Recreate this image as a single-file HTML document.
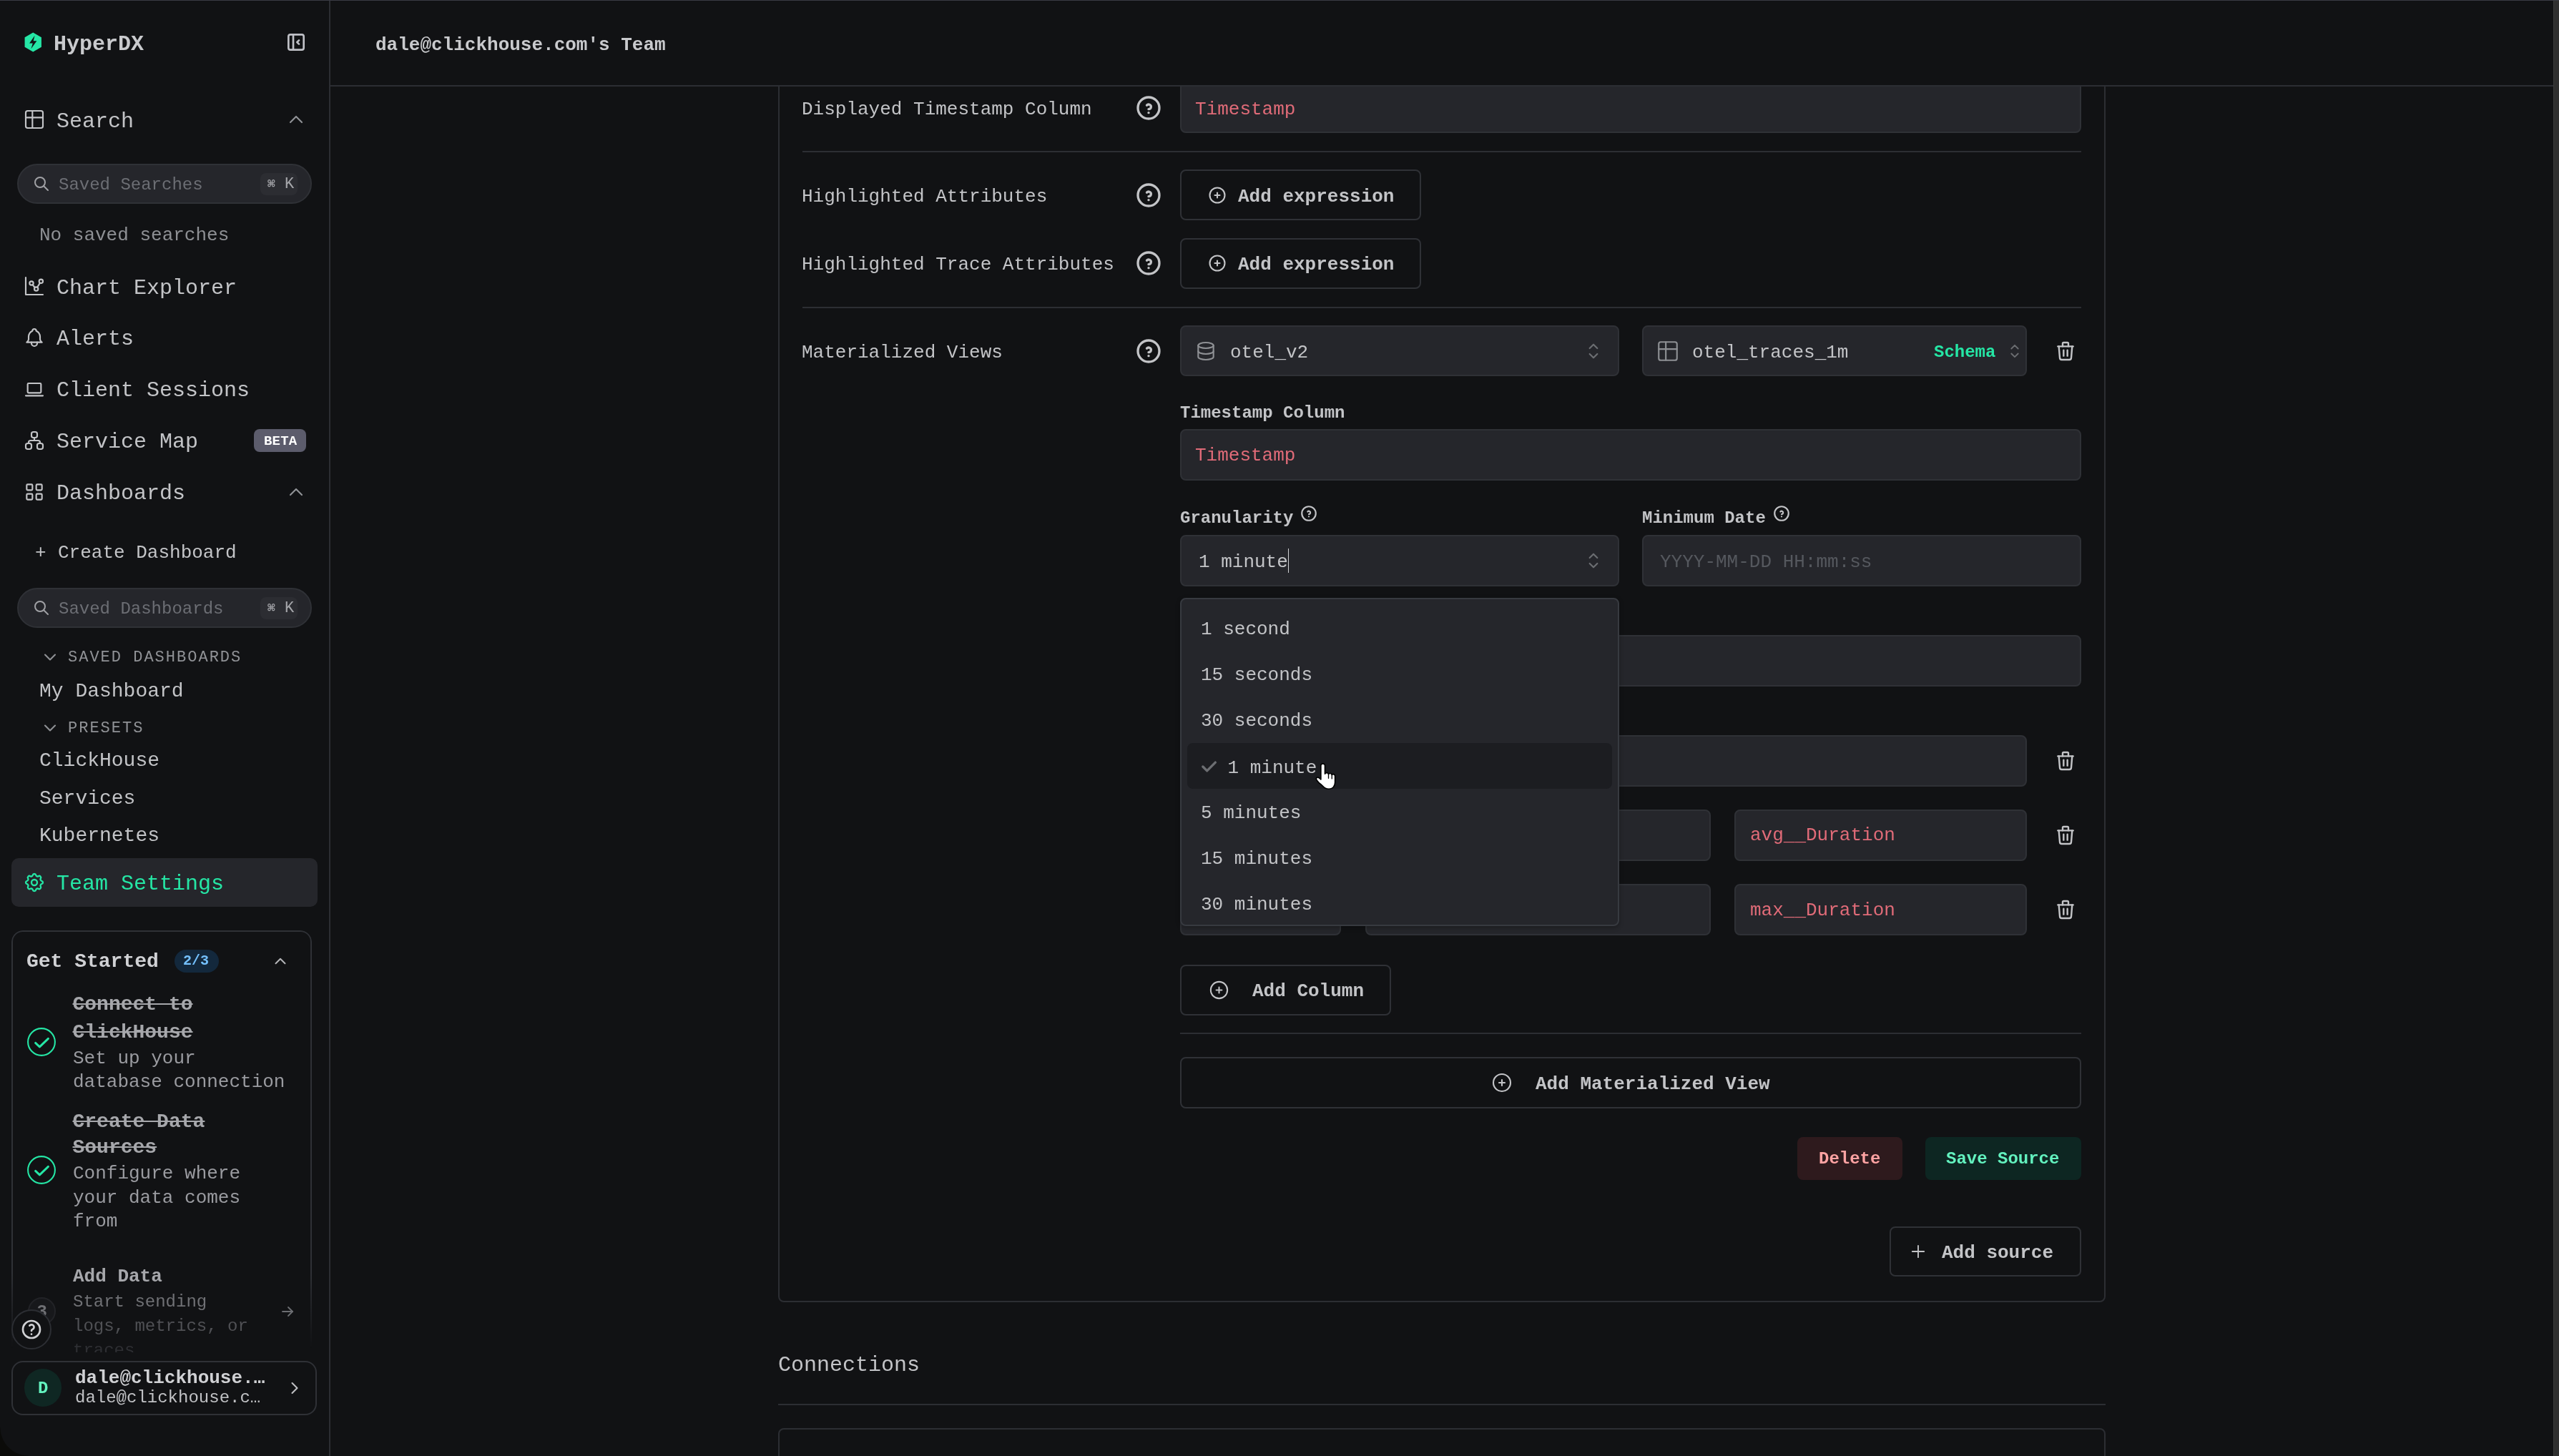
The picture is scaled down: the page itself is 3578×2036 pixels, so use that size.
<!DOCTYPE html>
<html><head><meta charset="utf-8"><style>
html,body{margin:0;padding:0;background:#111214;overflow:hidden}
#root{position:relative;width:1789px;height:1018px;zoom:2;background:#111214;overflow:hidden;font-family:"Liberation Mono",monospace;will-change:transform}
.t{position:absolute;line-height:1;white-space:pre}
.i{position:absolute;overflow:visible}
.b{position:absolute;box-sizing:border-box}
</style></head><body><div id="root">
<svg class="i" style="left:17px;top:22.5px;width:12.25px;height:14px" viewBox="0 0 26 30"><path d="M13 0.5 L25.5 7.75 V22.25 L13 29.5 L0.5 22.25 V7.75 Z" fill="#25e6a5"/><path d="M15.5 5 L7.5 16.5 H12.5 L10 25 L18.5 13 H13.5 Z" fill="#111214"/></svg>
<div class="t" style="left:37.50px;top:23.41px;font-size:15px;color:#c9cacd;font-weight:700;">HyperDX</div>
<svg class="i" style="left:199.00px;top:21.50px;width:16px;height:16px;" viewBox="0 0 24 24" fill="none" stroke="#bfc0c6" stroke-width="2" stroke-linecap="round" stroke-linejoin="round"><path d="M4 4m0 2a2 2 0 0 1 2 -2h12a2 2 0 0 1 2 2v12a2 2 0 0 1 -2 2h-12a2 2 0 0 1 -2 -2z"/><path d="M9 4v16"/><path d="M15 10l-2 2l2 2"/></svg>
<svg class="i" style="left:16.00px;top:75.50px;width:16px;height:16px;" viewBox="0 0 24 24" fill="none" stroke="#c3c4c7" stroke-width="1.6" stroke-linecap="round" stroke-linejoin="round"><path d="M3 5a2 2 0 0 1 2 -2h14a2 2 0 0 1 2 2v14a2 2 0 0 1 -2 2h-14a2 2 0 0 1 -2 -2v-14z"/><path d="M3 10h18"/><path d="M10 3v18"/></svg>
<div class="t" style="left:39.50px;top:77.41px;font-size:15px;color:#c3c4c7;font-weight:400;">Search</div>
<svg class="i" style="left:199.00px;top:75.50px;width:16px;height:16px;" viewBox="0 0 24 24" fill="none" stroke="#909296" stroke-width="1.6" stroke-linecap="round" stroke-linejoin="round"><path d="M6 15l6 -6l6 6"/></svg>
<div class="b" style="left:12.00px;top:114.50px;width:206.00px;height:27.75px;background:#25262b;border:1px solid #2f3136;border-radius:14px;"></div>
<svg class="i" style="left:23.00px;top:122.60px;width:12px;height:12px;" viewBox="0 0 24 24" fill="none" stroke="#a0a1a5" stroke-width="2" stroke-linecap="round" stroke-linejoin="round"><path d="M10 10m-7 0a7 7 0 1 0 14 0a7 7 0 1 0 -14 0"/><path d="M21 21l-6 -6"/></svg>
<div class="t" style="left:41.00px;top:123.31px;font-size:12px;color:#6c6e74;font-weight:400;">Saved Searches</div>
<div class="b" style="left:182.00px;top:121.00px;width:26.00px;height:15.25px;background:#2c2d32;border-radius:4px;"></div>
<div class="t" style="left:187.00px;top:124.51px;font-size:9px;color:#a6a7ab;font-weight:700;">&#8984;</div>
<div class="t" style="left:199.00px;top:123.67px;font-size:11px;color:#a6a7ab;font-weight:400;">K</div>
<div class="t" style="left:27.50px;top:158.04px;font-size:13px;color:#8e9094;font-weight:400;">No saved searches</div>
<svg class="i" style="left:16.00px;top:192.05px;width:16px;height:16px;" viewBox="0 0 24 24" fill="none" stroke="#c3c4c7" stroke-width="1.6" stroke-linecap="round" stroke-linejoin="round"><path d="M3 3v18h18"/><path d="M9 9m-2 0a2 2 0 1 0 4 0a2 2 0 1 0 -4 0"/><path d="M19 7m-2 0a2 2 0 1 0 4 0a2 2 0 1 0 -4 0"/><path d="M14 15m-2 0a2 2 0 1 0 4 0a2 2 0 1 0 -4 0"/><path d="M10.16 10.62l2.34 2.88"/><path d="M15.088 13.328l2.837 -4.586"/></svg>
<div class="t" style="left:39.50px;top:193.91px;font-size:15px;color:#c3c4c7;font-weight:400;">Chart Explorer</div>
<svg class="i" style="left:16.00px;top:227.95px;width:16px;height:16px;" viewBox="0 0 24 24" fill="none" stroke="#c3c4c7" stroke-width="1.6" stroke-linecap="round" stroke-linejoin="round"><path d="M10 5a2 2 0 1 1 4 0a7 7 0 0 1 4 6v3a4 4 0 0 0 2 3h-16a4 4 0 0 0 2 -3v-3a7 7 0 0 1 4 -6"/><path d="M9 17v1a3 3 0 0 0 6 0v-1"/></svg>
<div class="t" style="left:39.50px;top:229.51px;font-size:15px;color:#c3c4c7;font-weight:400;">Alerts</div>
<svg class="i" style="left:16.00px;top:264.00px;width:16px;height:16px;" viewBox="0 0 24 24" fill="none" stroke="#c3c4c7" stroke-width="1.6" stroke-linecap="round" stroke-linejoin="round"><path d="M3 19l18 0"/><path d="M5 6m0 1a1 1 0 0 1 1 -1h12a1 1 0 0 1 1 1v8a1 1 0 0 1 -1 1h-12a1 1 0 0 1 -1 -1z"/></svg>
<div class="t" style="left:39.50px;top:265.51px;font-size:15px;color:#c3c4c7;font-weight:400;">Client Sessions</div>
<svg class="i" style="left:16.00px;top:299.80px;width:16px;height:16px;" viewBox="0 0 24 24" fill="none" stroke="#c3c4c7" stroke-width="1.6" stroke-linecap="round" stroke-linejoin="round"><path d="M3 15m0 2a2 2 0 0 1 2 -2h2a2 2 0 0 1 2 2v2a2 2 0 0 1 -2 2h-2a2 2 0 0 1 -2 -2z"/><path d="M15 15m0 2a2 2 0 0 1 2 -2h2a2 2 0 0 1 2 2v2a2 2 0 0 1 -2 2h-2a2 2 0 0 1 -2 -2z"/><path d="M9 3m0 2a2 2 0 0 1 2 -2h2a2 2 0 0 1 2 2v2a2 2 0 0 1 -2 2h-2a2 2 0 0 1 -2 -2z"/><path d="M6 15v-1a2 2 0 0 1 2 -2h8a2 2 0 0 1 2 2v1"/><path d="M12 9l0 3"/></svg>
<div class="t" style="left:39.50px;top:301.51px;font-size:15px;color:#c3c4c7;font-weight:400;">Service Map</div>
<div class="b" style="left:177.50px;top:300.00px;width:36.25px;height:16.00px;background:#5c5c6c;border-radius:4px;"></div>
<div class="t" style="left:184.50px;top:303.82px;font-size:9.5px;color:#ffffff;font-weight:700;letter-spacing:0.1px">BETA</div>
<svg class="i" style="left:16.00px;top:336.05px;width:16px;height:16px;" viewBox="0 0 24 24" fill="none" stroke="#c3c4c7" stroke-width="1.6" stroke-linecap="round" stroke-linejoin="round"><path d="M4 4m0 1a1 1 0 0 1 1 -1h4a1 1 0 0 1 1 1v4a1 1 0 0 1 -1 1h-4a1 1 0 0 1 -1 -1z"/><path d="M14 4m0 1a1 1 0 0 1 1 -1h4a1 1 0 0 1 1 1v4a1 1 0 0 1 -1 1h-4a1 1 0 0 1 -1 -1z"/><path d="M4 14m0 1a1 1 0 0 1 1 -1h4a1 1 0 0 1 1 1v4a1 1 0 0 1 -1 1h-4a1 1 0 0 1 -1 -1z"/><path d="M14 14m0 1a1 1 0 0 1 1 -1h4a1 1 0 0 1 1 1v4a1 1 0 0 1 -1 1h-4a1 1 0 0 1 -1 -1z"/></svg>
<div class="t" style="left:39.50px;top:337.51px;font-size:15px;color:#c3c4c7;font-weight:400;">Dashboards</div>
<svg class="i" style="left:199.00px;top:336.05px;width:16px;height:16px;" viewBox="0 0 24 24" fill="none" stroke="#909296" stroke-width="1.6" stroke-linecap="round" stroke-linejoin="round"><path d="M6 15l6 -6l6 6"/></svg>
<div class="t" style="left:24.50px;top:379.79px;font-size:13px;color:#c3c4c7;font-weight:400;">+</div>
<div class="t" style="left:40.50px;top:379.79px;font-size:13px;color:#c3c4c7;font-weight:400;">Create Dashboard</div>
<div class="b" style="left:12.00px;top:411.00px;width:206.00px;height:27.75px;background:#25262b;border:1px solid #2f3136;border-radius:14px;"></div>
<svg class="i" style="left:23.00px;top:419.00px;width:12px;height:12px;" viewBox="0 0 24 24" fill="none" stroke="#a0a1a5" stroke-width="2" stroke-linecap="round" stroke-linejoin="round"><path d="M10 10m-7 0a7 7 0 1 0 14 0a7 7 0 1 0 -14 0"/><path d="M21 21l-6 -6"/></svg>
<div class="t" style="left:41.00px;top:419.81px;font-size:12px;color:#6c6e74;font-weight:400;">Saved Dashboards</div>
<div class="b" style="left:182.00px;top:417.50px;width:26.00px;height:15.25px;background:#2c2d32;border-radius:4px;"></div>
<div class="t" style="left:187.00px;top:421.01px;font-size:9px;color:#a6a7ab;font-weight:700;">&#8984;</div>
<div class="t" style="left:199.00px;top:420.17px;font-size:11px;color:#a6a7ab;font-weight:400;">K</div>
<svg class="i" style="left:28.00px;top:452.70px;width:14px;height:14px;" viewBox="0 0 24 24" fill="none" stroke="#909296" stroke-width="1.8" stroke-linecap="round" stroke-linejoin="round"><path d="M6 9l6 6l6 -6"/></svg>
<div class="t" style="left:47.50px;top:454.57px;font-size:11px;color:#909296;font-weight:400;letter-spacing:1px">SAVED DASHBOARDS</div>
<div class="t" style="left:27.50px;top:476.28px;font-size:14px;color:#c3c4c7;font-weight:400;">My Dashboard</div>
<svg class="i" style="left:28.00px;top:502.10px;width:14px;height:14px;" viewBox="0 0 24 24" fill="none" stroke="#909296" stroke-width="1.8" stroke-linecap="round" stroke-linejoin="round"><path d="M6 9l6 6l6 -6"/></svg>
<div class="t" style="left:47.50px;top:504.07px;font-size:11px;color:#909296;font-weight:400;letter-spacing:1px">PRESETS</div>
<div class="t" style="left:27.50px;top:525.03px;font-size:14px;color:#c3c4c7;font-weight:400;">ClickHouse</div>
<div class="t" style="left:27.50px;top:551.53px;font-size:14px;color:#c3c4c7;font-weight:400;">Services</div>
<div class="t" style="left:27.50px;top:577.28px;font-size:14px;color:#c3c4c7;font-weight:400;">Kubernetes</div>
<div class="b" style="left:8.00px;top:600.00px;width:214.00px;height:33.75px;background:#25262b;border-radius:5px;"></div>
<svg class="i" style="left:16.00px;top:609.00px;width:16px;height:16px;" viewBox="0 0 24 24" fill="none" stroke="#25e6a5" stroke-width="1.75" stroke-linecap="round" stroke-linejoin="round"><path d="M10.325 4.317c.426 -1.756 2.924 -1.756 3.35 0a1.724 1.724 0 0 0 2.573 1.066c1.543 -.94 3.31 .826 2.37 2.37a1.724 1.724 0 0 0 1.065 2.572c1.756 .426 1.756 2.924 0 3.35a1.724 1.724 0 0 0 -1.066 2.573c.94 1.543 -.826 3.31 -2.37 2.37a1.724 1.724 0 0 0 -2.572 1.065c-.426 1.756 -2.924 1.756 -3.35 0a1.724 1.724 0 0 0 -2.573 -1.066c-1.543 .94 -3.31 -.826 -2.37 -2.37a1.724 1.724 0 0 0 -1.065 -2.572c-1.756 -.426 -1.756 -2.924 0 -3.35a1.724 1.724 0 0 0 1.066 -2.573c-.94 -1.543 .826 -3.31 2.37 -2.37c1 .608 2.296 .07 2.572 -1.065z"/><path d="M9 12a3 3 0 1 0 6 0a3 3 0 0 0 -6 0"/></svg>
<div class="t" style="left:39.50px;top:610.26px;font-size:15px;color:#25e6a5;font-weight:400;">Team Settings</div>
<div class="b" style="left:8px;top:650.25px;width:210px;height:320px;border:1px solid #2f3136;border-radius:8px;-webkit-mask-image:linear-gradient(to bottom,#000 0,#000 240px,transparent 292px);mask-image:linear-gradient(to bottom,#000 0,#000 240px,transparent 292px)"></div>
<div class="t" style="left:18.50px;top:665.28px;font-size:14px;color:#d0d1d4;font-weight:700;">Get Started</div>
<div class="b" style="left:122.00px;top:664.00px;width:30.75px;height:15.75px;background:#13283c;border-radius:8px;"></div>
<div class="t" style="left:128.00px;top:667.14px;font-size:10px;color:#74c0fc;font-weight:700;">2/3</div>
<svg class="i" style="left:189.60px;top:665.60px;width:13px;height:13px;" viewBox="0 0 24 24" fill="none" stroke="#b5b6b9" stroke-width="1.8" stroke-linecap="round" stroke-linejoin="round"><path d="M6 15l6 -6l6 6"/></svg>
<svg class="i" style="left:17.00px;top:716.50px;width:24px;height:24px;" viewBox="0 0 24 24" fill="none" stroke="#25e6a5" stroke-width="1.5" stroke-linecap="round" stroke-linejoin="round"><circle cx="12" cy="12" r="9.45" stroke-width="1.05"/><path d="M7.8 12.7l2.9 2.7l6 -5.7" stroke-width="1.5"/></svg>
<div class="t" style="left:50.75px;top:695.68px;font-size:14px;color:#a6a7ab;font-weight:700;text-decoration:line-through;text-decoration-thickness:1px">Connect to</div>
<div class="t" style="left:50.75px;top:715.03px;font-size:14px;color:#a6a7ab;font-weight:700;text-decoration:line-through;text-decoration-thickness:1px">ClickHouse</div>
<div class="t" style="left:51.00px;top:733.29px;font-size:13px;color:#9a9ba0;font-weight:400;">Set up your</div>
<div class="t" style="left:51.00px;top:749.79px;font-size:13px;color:#9a9ba0;font-weight:400;">database connection</div>
<svg class="i" style="left:17.00px;top:806.00px;width:24px;height:24px;" viewBox="0 0 24 24" fill="none" stroke="#25e6a5" stroke-width="1.5" stroke-linecap="round" stroke-linejoin="round"><circle cx="12" cy="12" r="9.45" stroke-width="1.05"/><path d="M7.8 12.7l2.9 2.7l6 -5.7" stroke-width="1.5"/></svg>
<div class="t" style="left:50.75px;top:777.53px;font-size:14px;color:#a6a7ab;font-weight:700;text-decoration:line-through;text-decoration-thickness:1px">Create Data</div>
<div class="t" style="left:50.75px;top:795.68px;font-size:14px;color:#a6a7ab;font-weight:700;text-decoration:line-through;text-decoration-thickness:1px">Sources</div>
<div class="t" style="left:51.00px;top:813.94px;font-size:13px;color:#9a9ba0;font-weight:400;">Configure where</div>
<div class="t" style="left:51.00px;top:830.79px;font-size:13px;color:#9a9ba0;font-weight:400;">your data comes</div>
<div class="t" style="left:51.00px;top:847.54px;font-size:13px;color:#9a9ba0;font-weight:400;">from</div>
<div style="position:absolute;left:0;top:880px;width:230px;height:65.5px;overflow:hidden">
<div class="t" style="left:51.00px;top:6.04px;font-size:13px;color:#a6a7ab;font-weight:700;">Add Data</div>
<div class="t" style="left:51.00px;top:24.31px;font-size:12px;color:#707175;font-weight:400;">Start sending</div>
<div class="t" style="left:51.00px;top:41.31px;font-size:12px;color:#505155;font-weight:400;">logs, metrics, or</div>
<div class="t" style="left:51.00px;top:58.31px;font-size:12px;color:#2e2f33;font-weight:400;">traces</div>
<div class="b" style="left:19.5px;top:27px;width:19.5px;height:19.5px;background:#17181b;border:1px solid #222327;border-radius:50%"></div>
<div class="t" style="left:25.70px;top:31.61px;font-size:12px;color:#6e6f73;font-weight:700;">3</div>
</div>
<svg class="i" style="left:195.00px;top:911.00px;width:12px;height:12px;" viewBox="0 0 24 24" fill="none" stroke="#6c6e72" stroke-width="1.8" stroke-linecap="round" stroke-linejoin="round"><path d="M5 12l14 0"/><path d="M13 18l6 -6"/><path d="M13 6l6 6"/></svg>
<div class="b" style="left:8.00px;top:915.50px;width:28.00px;height:27.75px;background:#111214;border:1px solid #2c2e33;border-radius:14px;"></div>
<svg class="i" style="left:14.00px;top:921.40px;width:16px;height:16px;" viewBox="0 0 24 24" fill="none" stroke="#d0d1d4" stroke-width="2" stroke-linecap="round" stroke-linejoin="round"><path d="M12 12m-9 0a9 9 0 1 0 18 0a9 9 0 1 0 -18 0"/><path d="M12 17l0 .01"/><path d="M12 13.5a1.5 1.5 0 0 1 1 -1.5a2.6 2.6 0 1 0 -3 -4"/></svg>
<div class="b" style="left:8.00px;top:951.50px;width:213.50px;height:38.00px;background:transparent;border:1px solid #2f3136;border-radius:8px;"></div>
<div class="b" style="left:17.00px;top:957.00px;width:26.00px;height:26.50px;background:#0f2723;border-radius:13px;"></div>
<div class="t" style="left:26.50px;top:964.81px;font-size:12px;color:#63f2bf;font-weight:700;">D</div>
<div class="t" style="left:52.50px;top:957.04px;font-size:13px;color:#d0d1d4;font-weight:700;">dale@clickhouse.&#8230;</div>
<div class="t" style="left:52.50px;top:971.31px;font-size:12px;color:#c1c2c5;font-weight:400;">dale@clickhouse.c&#8230;</div>
<svg class="i" style="left:198.75px;top:963.25px;width:14px;height:14px;" viewBox="0 0 24 24" fill="none" stroke="#c1c2c5" stroke-width="1.8" stroke-linecap="round" stroke-linejoin="round"><path d="M9 6l6 6l-6 6"/></svg>
<div class="b" style="left:230px;top:0px;width:1px;height:1018px;background:#2c2e33"></div>
<div class="t" style="left:262.50px;top:24.94px;font-size:13px;color:#c9cacd;font-weight:700;">dale@clickhouse.com's Team</div>
<div class="b" style="left:231px;top:59.5px;width:1554px;height:1px;background:#2c2e33"></div>
<div style="position:absolute;left:231px;top:60.5px;width:1554px;height:958px;overflow:hidden">
<div style="position:absolute;left:-231px;top:-60.5px;width:1789px;height:1018px">
<div class="b" style="left:544.00px;top:20.00px;width:928.00px;height:890.50px;background:transparent;border:1px solid #2c2e33;border-radius:4px;"></div>
<div class="t" style="left:560.50px;top:69.79px;font-size:13px;color:#c3c4c7;font-weight:400;">Displayed Timestamp Column</div>
<svg class="i" style="left:792.80px;top:65.30px;width:20px;height:20px;" viewBox="0 0 24 24" fill="none" stroke="#c3c4c7" stroke-width="2" stroke-linecap="round" stroke-linejoin="round"><path d="M12 12m-9 0a9 9 0 1 0 18 0a9 9 0 1 0 -18 0"/><path d="M12 16v.01"/><path d="M12 13a2 2 0 0 0 .914 -3.782a1.98 1.98 0 0 0 -2.414 .483"/></svg>
<div class="b" style="left:825.00px;top:57.00px;width:630.00px;height:36.00px;background:#25262b;border:1px solid #2f3136;border-radius:4px;"></div>
<div class="t" style="left:835.50px;top:69.79px;font-size:13px;color:#e06b78;font-weight:400;">Timestamp</div>
<div class="b" style="left:561px;top:105.5px;width:894px;height:1px;background:#2c2e33"></div>
<div class="t" style="left:560.50px;top:130.79px;font-size:13px;color:#c3c4c7;font-weight:400;">Highlighted Attributes</div>
<svg class="i" style="left:792.80px;top:126.25px;width:20px;height:20px;" viewBox="0 0 24 24" fill="none" stroke="#c3c4c7" stroke-width="2" stroke-linecap="round" stroke-linejoin="round"><path d="M12 12m-9 0a9 9 0 1 0 18 0a9 9 0 1 0 -18 0"/><path d="M12 16v.01"/><path d="M12 13a2 2 0 0 0 .914 -3.782a1.98 1.98 0 0 0 -2.414 .483"/></svg>
<div class="b" style="left:825.00px;top:118.50px;width:168.50px;height:35.50px;background:transparent;border:1px solid #2f3136;border-radius:4px;"></div>
<svg class="i" style="left:844.00px;top:129.25px;width:14px;height:14px;" viewBox="0 0 24 24" fill="none" stroke="#c3c4c7" stroke-width="1.8" stroke-linecap="round" stroke-linejoin="round"><path d="M3 12a9 9 0 1 0 18 0a9 9 0 0 0 -18 0"/><path d="M9 12h6"/><path d="M12 9v6"/></svg>
<div class="t" style="left:865.50px;top:130.79px;font-size:13px;color:#c3c4c7;font-weight:700;">Add expression</div>
<div class="t" style="left:560.50px;top:178.54px;font-size:13px;color:#c3c4c7;font-weight:400;">Highlighted Trace Attributes</div>
<svg class="i" style="left:792.80px;top:174.10px;width:20px;height:20px;" viewBox="0 0 24 24" fill="none" stroke="#c3c4c7" stroke-width="2" stroke-linecap="round" stroke-linejoin="round"><path d="M12 12m-9 0a9 9 0 1 0 18 0a9 9 0 1 0 -18 0"/><path d="M12 16v.01"/><path d="M12 13a2 2 0 0 0 .914 -3.782a1.98 1.98 0 0 0 -2.414 .483"/></svg>
<div class="b" style="left:825.00px;top:166.50px;width:168.50px;height:35.50px;background:transparent;border:1px solid #2f3136;border-radius:4px;"></div>
<svg class="i" style="left:844.00px;top:177.10px;width:14px;height:14px;" viewBox="0 0 24 24" fill="none" stroke="#c3c4c7" stroke-width="1.8" stroke-linecap="round" stroke-linejoin="round"><path d="M3 12a9 9 0 1 0 18 0a9 9 0 0 0 -18 0"/><path d="M9 12h6"/><path d="M12 9v6"/></svg>
<div class="t" style="left:865.50px;top:178.54px;font-size:13px;color:#c3c4c7;font-weight:700;">Add expression</div>
<div class="b" style="left:561px;top:214.5px;width:894px;height:1px;background:#2c2e33"></div>
<div class="t" style="left:560.50px;top:239.94px;font-size:13px;color:#c3c4c7;font-weight:400;">Materialized Views</div>
<svg class="i" style="left:792.80px;top:235.60px;width:20px;height:20px;" viewBox="0 0 24 24" fill="none" stroke="#c3c4c7" stroke-width="2" stroke-linecap="round" stroke-linejoin="round"><path d="M12 12m-9 0a9 9 0 1 0 18 0a9 9 0 1 0 -18 0"/><path d="M12 16v.01"/><path d="M12 13a2 2 0 0 0 .914 -3.782a1.98 1.98 0 0 0 -2.414 .483"/></svg>
<div class="b" style="left:825.00px;top:227.50px;width:307.00px;height:35.50px;background:#25262b;border:1px solid #2f3136;border-radius:4px;"></div>
<svg class="i" style="left:835.00px;top:237.50px;width:16px;height:16px;" viewBox="0 0 24 24" fill="none" stroke="#8e9094" stroke-width="1.6" stroke-linecap="round" stroke-linejoin="round"><path d="M12 6m-8 0a8 3 0 1 0 16 0a8 3 0 1 0 -16 0"/><path d="M4 6v6a8 3 0 0 0 16 0v-6"/><path d="M4 12v6a8 3 0 0 0 16 0v-6"/></svg>
<div class="t" style="left:860.00px;top:239.94px;font-size:13px;color:#c3c4c7;font-weight:400;">otel_v2</div>
<svg class="i" style="left:1105.90px;top:237.25px;width:16px;height:16px;" viewBox="0 0 24 24" fill="none" stroke="#6c6e72" stroke-width="1.6" stroke-linecap="round" stroke-linejoin="round"><path d="M8 9l4 -4l4 4"/><path d="M16 15l-4 4l-4 -4"/></svg>
<div class="b" style="left:1148.00px;top:227.50px;width:269.00px;height:35.50px;background:#25262b;border:1px solid #2f3136;border-radius:4px;"></div>
<svg class="i" style="left:1157.50px;top:237.00px;width:17px;height:17px;" viewBox="0 0 24 24" fill="none" stroke="#8e9094" stroke-width="1.5" stroke-linecap="round" stroke-linejoin="round"><path d="M3 5a2 2 0 0 1 2 -2h14a2 2 0 0 1 2 2v14a2 2 0 0 1 -2 2h-14a2 2 0 0 1 -2 -2v-14z"/><path d="M3 10h18"/><path d="M10 3v18"/></svg>
<div class="t" style="left:1183.00px;top:239.94px;font-size:13px;color:#c3c4c7;font-weight:400;">otel_traces_1m</div>
<div class="t" style="left:1352.00px;top:240.51px;font-size:12px;color:#25e6a5;font-weight:700;">Schema</div>
<svg class="i" style="left:1401.25px;top:238.50px;width:14px;height:14px;" viewBox="0 0 24 24" fill="none" stroke="#6c6e72" stroke-width="1.6" stroke-linecap="round" stroke-linejoin="round"><path d="M8 9l4 -4l4 4"/><path d="M16 15l-4 4l-4 -4"/></svg>
<svg class="i" style="left:1436.00px;top:237.50px;width:16px;height:16px;" viewBox="0 0 24 24" fill="none" stroke="#c3c4c7" stroke-width="1.8" stroke-linecap="round" stroke-linejoin="round"><path d="M4 7l16 0"/><path d="M10 11l0 6"/><path d="M14 11l0 6"/><path d="M5 7l1 12a2 2 0 0 0 2 2h8a2 2 0 0 0 2 -2l1 -12"/><path d="M9 7v-3a1 1 0 0 1 1 -1h4a1 1 0 0 1 1 1v3"/></svg>
<div class="t" style="left:825.00px;top:282.81px;font-size:12px;color:#c3c4c7;font-weight:700;">Timestamp Column</div>
<div class="b" style="left:825.00px;top:300.00px;width:630.00px;height:36.00px;background:#25262b;border:1px solid #2f3136;border-radius:4px;"></div>
<div class="t" style="left:835.50px;top:312.04px;font-size:13px;color:#e06b78;font-weight:400;">Timestamp</div>
<div class="t" style="left:825.00px;top:356.31px;font-size:12px;color:#c3c4c7;font-weight:700;">Granularity</div>
<svg class="i" style="left:908.50px;top:352.50px;width:13px;height:13px;" viewBox="0 0 24 24" fill="none" stroke="#c3c4c7" stroke-width="2" stroke-linecap="round" stroke-linejoin="round"><path d="M12 12m-9 0a9 9 0 1 0 18 0a9 9 0 1 0 -18 0"/><path d="M12 16v.01"/><path d="M12 13a2 2 0 0 0 .914 -3.782a1.98 1.98 0 0 0 -2.414 .483"/></svg>
<div class="t" style="left:1148.00px;top:356.31px;font-size:12px;color:#c3c4c7;font-weight:700;">Minimum Date</div>
<svg class="i" style="left:1238.90px;top:352.50px;width:13px;height:13px;" viewBox="0 0 24 24" fill="none" stroke="#c3c4c7" stroke-width="2" stroke-linecap="round" stroke-linejoin="round"><path d="M12 12m-9 0a9 9 0 1 0 18 0a9 9 0 1 0 -18 0"/><path d="M12 16v.01"/><path d="M12 13a2 2 0 0 0 .914 -3.782a1.98 1.98 0 0 0 -2.414 .483"/></svg>
<div class="b" style="left:825.00px;top:374.00px;width:307.00px;height:36.00px;background:#25262b;border:1px solid #2f3136;border-radius:4px;"></div>
<div class="t" style="left:838.00px;top:386.54px;font-size:13px;color:#c3c4c7;font-weight:400;">1 minute</div>
<div class="b" style="left:900.25px;top:383.5px;width:0.5px;height:17.0px;background:#d0d1d4"></div>
<svg class="i" style="left:1105.90px;top:384.00px;width:16px;height:16px;" viewBox="0 0 24 24" fill="none" stroke="#6c6e72" stroke-width="1.6" stroke-linecap="round" stroke-linejoin="round"><path d="M8 9l4 -4l4 4"/><path d="M16 15l-4 4l-4 -4"/></svg>
<div class="b" style="left:1148.00px;top:374.00px;width:307.00px;height:36.00px;background:#25262b;border:1px solid #2f3136;border-radius:4px;"></div>
<div class="t" style="left:1160.50px;top:386.54px;font-size:13px;color:#55585e;font-weight:400;">YYYY-MM-DD HH:mm:ss</div>
<div class="b" style="left:900.00px;top:444.00px;width:555.00px;height:36.00px;background:#25262b;border:1px solid #2f3136;border-radius:4px;"></div>
<div class="b" style="left:900.00px;top:514.00px;width:517.00px;height:36.00px;background:#25262b;border:1px solid #2f3136;border-radius:4px;"></div>
<svg class="i" style="left:1436.00px;top:524.00px;width:16px;height:16px;" viewBox="0 0 24 24" fill="none" stroke="#c3c4c7" stroke-width="1.8" stroke-linecap="round" stroke-linejoin="round"><path d="M4 7l16 0"/><path d="M10 11l0 6"/><path d="M14 11l0 6"/><path d="M5 7l1 12a2 2 0 0 0 2 2h8a2 2 0 0 0 2 -2l1 -12"/><path d="M9 7v-3a1 1 0 0 1 1 -1h4a1 1 0 0 1 1 1v3"/></svg>
<div class="b" style="left:825.00px;top:566.00px;width:112.50px;height:36.00px;background:#25262b;border:1px solid #2f3136;border-radius:4px;"></div>
<div class="b" style="left:954.40px;top:566.00px;width:241.60px;height:36.00px;background:#25262b;border:1px solid #2f3136;border-radius:4px;"></div>
<div class="b" style="left:1212.50px;top:566.00px;width:204.50px;height:36.00px;background:#25262b;border:1px solid #2f3136;border-radius:4px;"></div>
<div class="t" style="left:1223.50px;top:577.54px;font-size:13px;color:#e06b78;font-weight:400;">avg__Duration</div>
<svg class="i" style="left:1436.00px;top:576.00px;width:16px;height:16px;" viewBox="0 0 24 24" fill="none" stroke="#c3c4c7" stroke-width="1.8" stroke-linecap="round" stroke-linejoin="round"><path d="M4 7l16 0"/><path d="M10 11l0 6"/><path d="M14 11l0 6"/><path d="M5 7l1 12a2 2 0 0 0 2 2h8a2 2 0 0 0 2 -2l1 -12"/><path d="M9 7v-3a1 1 0 0 1 1 -1h4a1 1 0 0 1 1 1v3"/></svg>
<div class="b" style="left:825.00px;top:618.00px;width:112.50px;height:36.00px;background:#25262b;border:1px solid #2f3136;border-radius:4px;"></div>
<div class="b" style="left:954.40px;top:618.00px;width:241.60px;height:36.00px;background:#25262b;border:1px solid #2f3136;border-radius:4px;"></div>
<div class="b" style="left:1212.50px;top:618.00px;width:204.50px;height:36.00px;background:#25262b;border:1px solid #2f3136;border-radius:4px;"></div>
<div class="t" style="left:1223.50px;top:630.04px;font-size:13px;color:#e06b78;font-weight:400;">max__Duration</div>
<svg class="i" style="left:1436.00px;top:628.00px;width:16px;height:16px;" viewBox="0 0 24 24" fill="none" stroke="#c3c4c7" stroke-width="1.8" stroke-linecap="round" stroke-linejoin="round"><path d="M4 7l16 0"/><path d="M10 11l0 6"/><path d="M14 11l0 6"/><path d="M5 7l1 12a2 2 0 0 0 2 2h8a2 2 0 0 0 2 -2l1 -12"/><path d="M9 7v-3a1 1 0 0 1 1 -1h4a1 1 0 0 1 1 1v3"/></svg>
<div class="b" style="left:825.00px;top:674.40px;width:147.50px;height:35.60px;background:transparent;border:1px solid #2f3136;border-radius:4px;"></div>
<svg class="i" style="left:844.25px;top:684.25px;width:15.5px;height:15.5px;" viewBox="0 0 24 24" fill="none" stroke="#c3c4c7" stroke-width="1.6" stroke-linecap="round" stroke-linejoin="round"><path d="M3 12a9 9 0 1 0 18 0a9 9 0 0 0 -18 0"/><path d="M9 12h6"/><path d="M12 9v6"/></svg>
<div class="t" style="left:875.50px;top:686.54px;font-size:13px;color:#c3c4c7;font-weight:700;">Add Column</div>
<div class="b" style="left:825px;top:722px;width:630px;height:1px;background:#2c2e33"></div>
<div class="b" style="left:825.00px;top:739.00px;width:630.00px;height:36.00px;background:transparent;border:1px solid #2f3136;border-radius:4px;"></div>
<svg class="i" style="left:1042.00px;top:749.00px;width:16px;height:16px;" viewBox="0 0 24 24" fill="none" stroke="#c3c4c7" stroke-width="1.6" stroke-linecap="round" stroke-linejoin="round"><path d="M3 12a9 9 0 1 0 18 0a9 9 0 0 0 -18 0"/><path d="M9 12h6"/><path d="M12 9v6"/></svg>
<div class="t" style="left:1073.50px;top:751.54px;font-size:13px;color:#c3c4c7;font-weight:700;">Add Materialized View</div>
<div class="b" style="left:1256.60px;top:795.00px;width:73.40px;height:30.00px;background:#2e1a1d;border-radius:4px;"></div>
<div class="t" style="left:1271.50px;top:804.61px;font-size:12px;color:#ffa3a3;font-weight:700;">Delete</div>
<div class="b" style="left:1346.00px;top:795.00px;width:109.00px;height:30.00px;background:#0d2622;border-radius:4px;"></div>
<div class="t" style="left:1360.50px;top:804.61px;font-size:12px;color:#63f2bf;font-weight:700;">Save Source</div>
<div class="b" style="left:1321.00px;top:857.40px;width:134.00px;height:35.10px;background:transparent;border:1px solid #2f3136;border-radius:4px;"></div>
<svg class="i" style="left:1334.10px;top:868.00px;width:14px;height:14px;" viewBox="0 0 24 24" fill="none" stroke="#c3c4c7" stroke-width="1.6" stroke-linecap="round" stroke-linejoin="round"><path d="M12 5l0 14"/><path d="M5 12l14 0"/></svg>
<div class="t" style="left:1357.50px;top:869.54px;font-size:13px;color:#c3c4c7;font-weight:700;">Add source</div>
<div class="t" style="left:544.00px;top:947.01px;font-size:15px;color:#c3c4c7;font-weight:400;">Connections</div>
<div class="b" style="left:544px;top:981.5px;width:928px;height:1px;background:#2c2e33"></div>
<div class="b" style="left:544.00px;top:998.50px;width:928.00px;height:101.50px;background:transparent;border:1px solid #2c2e33;border-radius:4px;"></div>
<div class="b" style="left:825.00px;top:418.00px;width:307.00px;height:229.25px;background:#25262b;border:1px solid #373a40;border-radius:4px;box-shadow:0 1px 3px rgba(0,0,0,.3)"></div>
<div class="t" style="left:839.50px;top:433.54px;font-size:13px;color:#c3c4c7;font-weight:400;">1 second</div>
<div class="t" style="left:839.50px;top:465.44px;font-size:13px;color:#c3c4c7;font-weight:400;">15 seconds</div>
<div class="t" style="left:839.50px;top:497.29px;font-size:13px;color:#c3c4c7;font-weight:400;">30 seconds</div>
<div class="t" style="left:839.50px;top:562.04px;font-size:13px;color:#c3c4c7;font-weight:400;">5 minutes</div>
<div class="t" style="left:839.50px;top:593.94px;font-size:13px;color:#c3c4c7;font-weight:400;">15 minutes</div>
<div class="t" style="left:839.50px;top:626.04px;font-size:13px;color:#c3c4c7;font-weight:400;">30 minutes</div>
<div class="b" style="left:830.00px;top:519.40px;width:297.00px;height:32.20px;background:#1c1d21;border-radius:4px;"></div>
<svg class="i" style="left:838.00px;top:529.20px;width:14px;height:14px;" viewBox="0 0 24 24" fill="none" stroke="#6c6e72" stroke-width="2.9" stroke-linecap="round" stroke-linejoin="round"><path d="M5 12l5 5l10 -10"/></svg>
<div class="t" style="left:858.25px;top:530.44px;font-size:13px;color:#c3c4c7;font-weight:400;">1 minute</div>
<svg class="i" style="left:919px;top:533.5px;width:15.5px;height:18.5px" viewBox="1 0.3 15 19.4"><path d="M5 2.2C5 1.2 5.8 .8 6.5 .8C7.3 .8 8 1.3 8 2.2V8.2C8.2 7.7 8.7 7.4 9.3 7.4C10 7.4 10.5 7.9 10.6 8.5C10.8 8.1 11.3 7.9 11.8 7.9C12.5 7.9 13 8.4 13.1 9C13.3 8.7 13.7 8.5 14.1 8.5C14.9 8.5 15.4 9.1 15.4 9.9V14.5C15.4 17.4 13.6 19.3 10.9 19.3C8.7 19.3 7.4 18.4 6.3 17.1C5.4 16.2 4.6 15.5 3.8 15C2.8 13.9 1.6 12.7 1.6 11.9C1.6 11.2 2.2 10.7 2.9 10.8C3.7 10.9 4.4 11.6 5 12.3Z" fill="#fff" stroke="#000" stroke-width="0.9" stroke-linejoin="round"/><path d="M10.6 8.6V11.5M13.1 9.1V11.8" stroke="#000" stroke-width="0.7" stroke-linecap="round"/></svg>
</div></div>
<div class="b" style="left:1785px;top:0;width:4px;height:1018px;background:#2f2f2f;border-left:0.5px solid #3a3a3a"></div>
<div class="b" style="left:0px;top:0px;width:1789px;height:0.5px;background:#3a3b44"></div>
<div class="b" style="left:0;top:998px;width:20px;height:20px;background:radial-gradient(circle at 20px 0, transparent 19.5px, #0b0b09 20px)"></div>
</div></body></html>
